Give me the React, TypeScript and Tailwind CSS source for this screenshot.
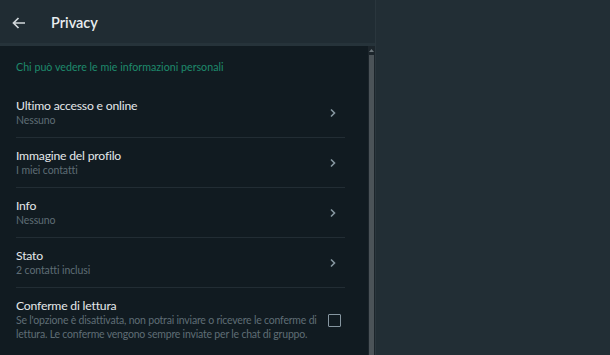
import React from "react";

const font = { fontFamily: 'Lato, "Open Sans", sans-serif' };

function Chevron() {
  return (
    <svg width="8" height="10" viewBox="0 0 8 10" className="shrink-0 mr-[8px]">
      <path d="M2 1.5 L5.5 5 L2 8.5" fill="none" stroke="#8696a0" strokeWidth="1.6" />
    </svg>
  );
}

const rows = [
  { t: "Ultimo accesso e online", s: "Nessuno" },
  { t: "Immagine del profilo", s: "I miei contatti" },
  { t: "Info", s: "Nessuno" },
  { t: "Stato", s: "2 contatti inclusi" },
];

export default function App() {
  return (
    <div className="flex w-[610px] h-[355px] overflow-hidden bg-[#222e35]" style={font}>
      <div className="flex flex-col w-[376px] h-full border-r border-[#2a363d]">
        <div className="h-[43px] shrink-0 flex items-center bg-[#202c33]">
          <svg width="14" height="12" viewBox="0 0 14 12" className="ml-[12px] mt-[2px]">
            <path d="M13 6 H1.8 M6.5 1 L1.5 6 L6.5 11" fill="none" stroke="#d1d7db" strokeWidth="1.7" />
          </svg>
          <span className="ml-[25px] mt-[2px] text-[14.5px] font-semibold text-[#e9edef]">Privacy</span>
        </div>
        <div className="h-[3px] shrink-0 bg-[#26333a]" />
        <div className="flex flex-1 min-h-0 bg-[#111b21]">
          <div className="flex-1 flex flex-col pl-[16px] pr-[23px]">
            <div className="h-[42px] shrink-0 flex items-center text-[10.7px] text-[#1e8a6c]">
              Chi può vedere le mie informazioni personali
            </div>
            {rows.map((r) => (
              <div key={r.t} className="h-[50px] shrink-0 flex items-center border-b border-[#222d34]">
                <div className="flex-1 flex flex-col">
                  <span className="text-[12.2px] leading-[14px] tracking-[-0.2px] text-[#e4e8ea]">{r.t}</span>
                  <span className="text-[10.5px] leading-[14px] tracking-[-0.1px] text-[#5f6d75]">{r.s}</span>
                </div>
                <Chevron />
              </div>
            ))}
            <div className="flex items-center pt-[11px]">
              <div className="flex-1 flex flex-col">
                <span className="text-[12.2px] leading-[14px] tracking-[-0.2px] text-[#e4e8ea]">Conferme di lettura</span>
                <span className="text-[10.5px] leading-[14px] tracking-[-0.2px] text-[#5f6d75] whitespace-nowrap">
                  Se l'opzione è disattivata, non potrai inviare o ricevere le conferme di
                  <br />
                  lettura. Le conferme vengono sempre inviate per le chat di gruppo.
                </span>
              </div>
              <div className="w-[13px] h-[13px] border-[1.5px] border-[#8696a0] rounded-[1px] shrink-0 ml-[10px] mr-[4px]" />
            </div>
          </div>
          <div className="w-[7px] shrink-0 flex flex-col items-center bg-[#1c252b]">
            <svg width="7" height="9" viewBox="0 0 7 9">
              <path d="M1 6 L3.5 3 L6 6 Z" fill="#6b757a" />
            </svg>
            <div className="w-[5px] flex-1 bg-[#4b5358]" />
          </div>
        </div>
      </div>
      <div className="flex-1" />
    </div>
  );
}
